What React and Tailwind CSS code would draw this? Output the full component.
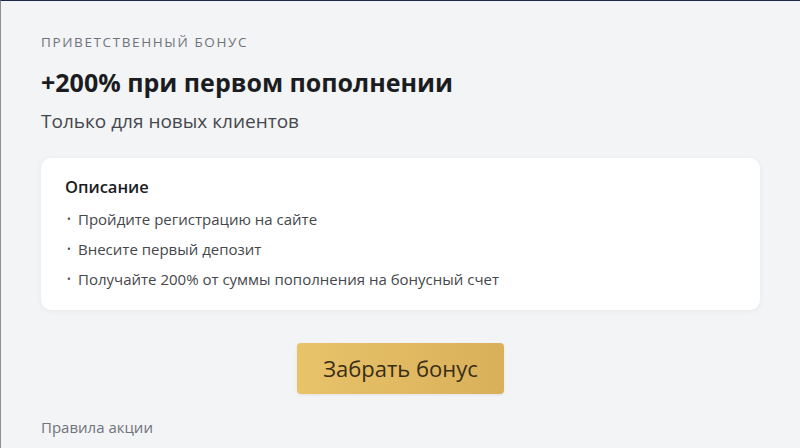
export default function App() {
  const steps = [
    'Пройдите регистрацию на сайте',
    'Внесите первый депозит',
    'Получайте 200% от суммы пополнения на бонусный счет',
  ]

  return (
    <div className="h-[448px] w-[800px] overflow-hidden bg-[#f3f4f6] border-t border-[#1e2a4a] border-l border-l-[#8a8f99]"
      style={{ fontFamily: '"Open Sans", "Liberation Sans", sans-serif' }}>
      <div className="px-10 pt-[33px]">
        <p className="text-[13.5px] uppercase tracking-[0.12em] text-[#6f737b] leading-4">Приветственный бонус</p>
        <h1 className="mt-[16px] text-[25px] font-bold text-[#1b1c1f] leading-8">+200% при первом пополнении</h1>
        <p className="mt-[11px] text-[19px] text-[#45474c] leading-6">Только для новых клиентов</p>

        <div className="mt-[25px] bg-white rounded-[10px] shadow-[0_1px_6px_rgba(0,0,0,0.05)] px-6 pt-[19px] pb-[21px]">
          <h2 className="text-[16.5px] font-semibold text-[#1b1c1f] leading-5">Описание</h2>
          <ul className="mt-[12px] space-y-[10px]">
            {steps.map(s => (
              <li key={s} className="flex items-center text-[15px] text-[#45474c] leading-5">
                <span className="w-[13px] pl-[2px] text-[10px]">•</span>
                {s}
              </li>
            ))}
          </ul>
        </div>

        <div className="mt-[33px] flex justify-center">
          <button className="w-[207px] h-[51px] rounded-[4px] bg-gradient-to-r from-[#e8c36a] to-[#d9b05a] text-[22px] text-[#3a2d16] shadow-[0_1px_3px_rgba(0,0,0,0.08)]">
            Забрать бонус
          </button>
        </div>

        <p className="mt-[23px] text-[15px] text-[#6f737b] leading-5">Правила акции</p>
      </div>
    </div>
  )
}
